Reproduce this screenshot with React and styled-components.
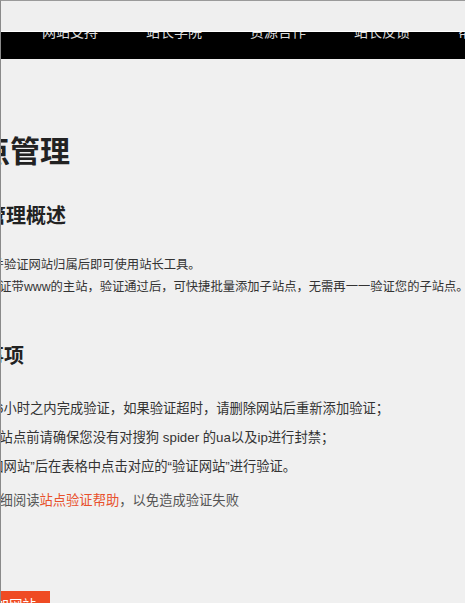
import React from "react";
import styled, { createGlobalStyle } from "styled-components";

const GlobalStyle = createGlobalStyle`
  html, body {
    margin: 0;
    padding: 0;
    background: #f0f0f0;
    overflow: hidden;
  }
`;

const FONT = `"Liberation Sans", "Noto Sans CJK SC", sans-serif`;

const Frame = styled.div`
  width: 465px;
  height: 603px;
  box-sizing: border-box;
  border-top: 1px solid #9a9a9a;
  border-left: 1px solid #8a8a8a;
  background: #f0f0f0;
  overflow: hidden;
  font-family: ${FONT};
  color: #333;
`;

const TopBand = styled.div`
  height: 30px;
  background: #efefef;
  border-bottom: 1px solid #ffffff;
`;

const NavBar = styled.nav`
  height: 27px;
  background: #000;
  overflow: hidden;
  display: flex;
  gap: 48px;
  padding-left: 41px;
`;

const NavItem = styled.a`
  flex: none;
  margin-top: -7px;
  font-size: 14px;
  line-height: 14px;
  color: #dcdcdc;
  white-space: nowrap;
`;

const Content = styled.main`
  display: flex;
  flex-direction: column;
  align-items: flex-start;
`;

const Title = styled.h1`
  margin: 78px 0 0 ${(p) => p.$x}px;
  font-size: 30px;
  line-height: 30px;
  font-weight: 700;
  color: #222;
  white-space: nowrap;
`;

const SubTitle = styled.h2`
  margin: ${(p) => p.$top}px 0 0 ${(p) => p.$x}px;
  font-size: 20px;
  line-height: 20px;
  font-weight: 700;
  color: #222;
  white-space: nowrap;
`;

const Para = styled.p`
  margin: ${(p) => p.$top || 0}px 0 0 ${(p) => p.$x}px;
  font-size: 12.3px;
  line-height: 22px;
  color: #333;
  white-space: nowrap;
`;

const Item = styled.p`
  margin: ${(p) => p.$top || 0}px 0 0 ${(p) => p.$x}px;
  font-size: 13.3px;
  line-height: 29px;
  color: ${(p) => (p.$muted ? "#555" : "#333")};
  white-space: nowrap;
`;

const HelpLink = styled.a`
  color: #e8502c;
  text-decoration: none;
`;

const AddButton = styled.button`
  margin: 76px 0 0 -33px;
  padding: 0 14px;
  height: 30px;
  border: none;
  border-radius: 0;
  background: #ef4b23;
  color: #fff;
  font-family: ${FONT};
  font-size: 13.5px;
  line-height: 30px;
  white-space: nowrap;
`;

const navLinks = ["网站支持", "站长学院", "资源合作", "站长反馈", "帮助中心"];

export default function App() {
  return (
    <Frame>
      <GlobalStyle />
      <TopBand />
      <NavBar>
        {navLinks.map((n) => (
          <NavItem key={n}>{n}</NavItem>
        ))}
      </NavBar>

      <Content>
        <Title $x={-51}>站点管理</Title>

        <SubTitle $top={39} $x={-55}>站点管理概述</SubTitle>
        <Para $top={28} $x={-34}>添加并验证网站归属后即可使用站长工具。</Para>
        <Para $x={-14}>验证带www的主站，验证通过后，可快捷批量添加子站点，无需再一一验证您的子站点。</Para>

        <SubTitle $top={48} $x={-57}>注意事项</SubTitle>
        <Item $top={28} $x={-98}>请在添加网站后6小时之内完成验证，如果验证超时，请删除网站后重新添加验证；</Item>
        <Item $x={-28}>添加站点前请确保您没有对搜狗 spider 的ua以及ip进行封禁；</Item>
        <Item $x={-55}>点击“添加网站”后在表格中点击对应的“验证网站”进行验证。</Item>
        <Item $top={5} $x={-28} $muted>
          请仔细阅读<HelpLink>站点验证帮助</HelpLink>，以免造成验证失败
        </Item>

        <AddButton>添加网站</AddButton>
      </Content>
    </Frame>
  );
}
